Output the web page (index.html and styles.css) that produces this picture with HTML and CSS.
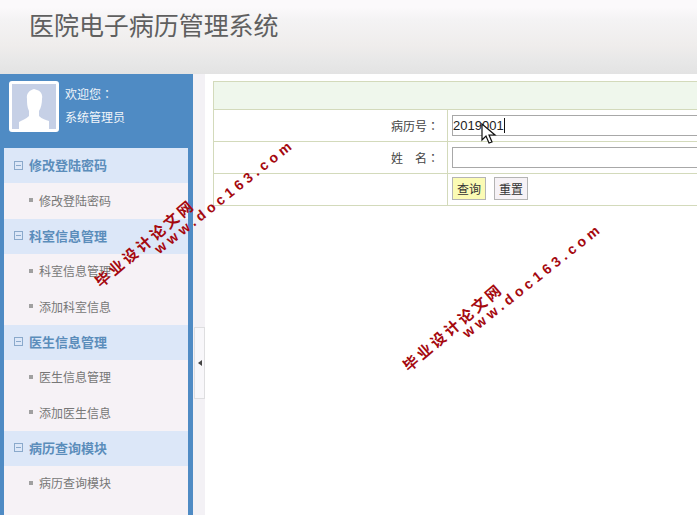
FILE: index.html
```html
<!DOCTYPE html>
<html lang="zh">
<head>
<meta charset="utf-8">
<title>医院电子病历管理系统</title>
<link rel="stylesheet" href="styles.css">
</head>
<body>
<header class="top"><h1 class="brand">医院电子病历管理系统</h1></header>
<div class="body">
  <aside class="side">
    <div class="user">
      <div class="avatar">
        <svg width="44" height="45" viewBox="0 0 44 45"><rect width="44" height="45" fill="#c6d0e6"/><path d="M15 15c-1-6 3-9 7-10l3 1c4 1 6 5 5 9 0 4-1 9-3 12v5c3 3 7 4 10 5v8H7v-7c3-2 7-3 10-6v-5c-2-4-2-8-2-12z" fill="#fff"/></svg>
      </div>
      <div class="who"><p>欢迎您<span class="colon" lang="zh-Hant">：</span></p><p>系统管理员</p></div>
    </div>
    <nav class="menu">
      <div class="mh"><i class="minus"></i>修改登陆密码</div>
      <a class="mi">修改登陆密码</a>
      <div class="mh"><i class="minus"></i>科室信息管理</div>
      <a class="mi">科室信息管理</a>
      <a class="mi">添加科室信息</a>
      <div class="mh"><i class="minus"></i>医生信息管理</div>
      <a class="mi">医生信息管理</a>
      <a class="mi">添加医生信息</a>
      <div class="mh"><i class="minus"></i>病历查询模块</div>
      <a class="mi">病历查询模块</a>
    </nav>
  </aside>
  <div class="split"><div class="toggle"><span class="arrow"></span></div></div>
  <main class="main">
    <table class="form">
      <colgroup><col class="c1"><col></colgroup>
      <tr class="head"><td colspan="2"></td></tr>
      <tr><td class="lab">病历号<span class="colon" lang="zh-Hant">：</span></td><td class="val"><div class="inp">2019001<span class="caret"></span></div></td></tr>
      <tr><td class="lab">姓&#12288;名<span class="colon" lang="zh-Hant">：</span></td><td class="val"><div class="inp"></div></td></tr>
      <tr><td class="lab"></td><td class="val btns"><button class="btn yes">查询</button><button class="btn">重置</button></td></tr>
    </table>
  </main>
</div>
<svg class="cursor" width="16" height="22" viewBox="0 0 16 22"><path d="M1 1v16l4-4 3 7 3-1-3-7h6z" fill="#fff" stroke="#111" stroke-width="1.2"/></svg>
<div class="mark m1"><div class="cn">毕业设计论文网</div><div class="en">www.doc163.com</div></div>
<div class="mark m2"><div class="cn">毕业设计论文网</div><div class="en">www.doc163.com</div></div>
</body>
</html>
```
FILE: styles.css
```css
* { box-sizing: border-box; }
html, body { margin: 0; height: 100%; overflow: hidden; }
body { width: 697px; height: 515px; position: relative; background: #fff; font: 12px "Liberation Sans", "Noto Sans CJK SC", sans-serif; color: #555; }
.top { height: 74px; background: linear-gradient(#fbf9fb 0, #fbf9fb 7px, #f4f3f4 20px, #efedec 45px, #e8e8e8 60px, #e3e3e3 74px); padding: 9px 0 0 29px; }
.brand { margin: 0; font-size: 25px; line-height: 34px; font-weight: 400; color: #5f5f5f; letter-spacing: -.05px; }
.body { display: flex; height: 441px; }
.side { width: 193px; background: #4f8bc4; padding: 0 5px 0 4px; flex: none; }
.user { display: flex; height: 74px; padding: 7px 0 0 5px; }
.avatar { width: 50px; height: 51px; border: 3px solid #fff; border-radius: 3px; background: #c6d0e6; overflow: hidden; }
.avatar svg { display: block; }
.who { margin-left: 6px; color: #fff; font-size: 12px; }
.who p { margin: 0; height: 24px; line-height: 24px; opacity: .92; }
.who p:first-child { margin-top: 1px; }
.colon { font-family: "Noto Sans CJK TC", sans-serif; }
.menu { background: #f6f2f6; height: 367px; }
.mh { height: 35px; background: #dce7f8; color: #5b8dbb; font-weight: 700; font-size: 13px; display: flex; align-items: center; padding: 0 0 2px 10px; }
.minus { width: 9px; height: 9px; border: 1px solid #8aa9cb; margin: 1px 6px 0 0; position: relative; flex: none; }
.minus::after { content: ""; position: absolute; left: 1px; right: 1px; top: 3px; height: 1px; background: #8aa9cb; }
.mi { display: flex; align-items: center; height: 35.5px; padding: 0 0 1px 25px; color: #777; font-size: 12px; }
.mi::before { content: ""; width: 4px; height: 4px; background: #a0a0a0; margin-right: 6px; flex: none; }
.split { width: 12px; flex: none; background: #f3f1f5; padding-top: 253px; }
.toggle { width: 11px; height: 72px; margin-left: 1px; background: #f8f7fa; border: 1px solid #dedee0; display: flex; align-items: center; justify-content: center; }
.arrow { width: 0; height: 0; border-style: solid; border-color: transparent #444 transparent transparent; border-width: 3px 4px 3px 0; }
.main { flex: 1; min-width: 0; padding: 7px 0 0 8px; background: #fff; overflow: hidden; }
.form { width: 520px; border-collapse: collapse; border: 1px solid #d3dabb; font-size: 12px; color: #444; table-layout: fixed; }
.c1 { width: 234px; }
.form td { border: 1px solid #d3dabb; padding: 0; height: 32px; }
.head td { background: #eff7ec; height: 28px; }
.lab { text-align: right; padding-right: 8px !important; }
.val { padding-left: 4px !important; }
.inp { width: 300px; height: 21px; border: 1px solid #a8a8a8; font-size: 13px; color: #222; line-height: 19px; white-space: nowrap; }
.caret { display: inline-block; width: 1px; height: 15px; background: #111; vertical-align: -3px; }
.btns { font-size: 0; }
.btn { width: 34px; height: 23px; border: 1px solid #b4b4b4; background: #f6f2f6; padding: 0; font: 12px "Liberation Sans", "Noto Sans CJK SC", sans-serif; color: #333; margin: 0 8px 2px 0; vertical-align: middle; }
.btn.yes { background: #fbfbb4; }
.cursor { position: absolute; left: 481px; top: 123px; }
.mark { position: absolute; width: 210px; color: #a5090f; font-weight: 700; transform: rotate(-38.5deg); transform-origin: 0 0; white-space: nowrap; }
.mark .cn { font-size: 15px; letter-spacing: 3px; line-height: 16px; margin-left: -2px; transform: rotate(-2deg); transform-origin: left center; }
.mark .en { font-size: 14px; letter-spacing: 4.1px; line-height: 15px; margin-left: 65px; margin-top: -5px; }
.m1 { left: 94px; top: 277px; }
.m2 { left: 402px; top: 361px; }
```
